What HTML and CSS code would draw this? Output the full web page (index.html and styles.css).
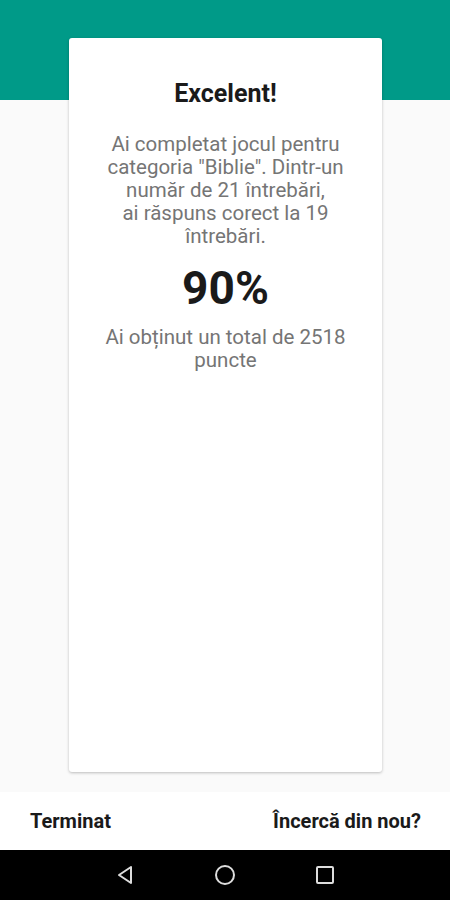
FILE: index.html
```html
<!DOCTYPE html>
<html lang="ro">
<head>
    <meta charset="UTF-8">
    <meta name="viewport" content="width=device-width, initial-scale=1.0">
    <title>Rezultat</title>
    <link rel="stylesheet" href="styles.css">
</head>
<body>
    <div class="screen">
        <div class="header"></div>

        <div class="content">
            <div class="card">
                <h1 class="title">Excelent!</h1>
                <p class="summary">Ai completat jocul pentru categoria "Biblie". Dintr-un număr de 21 întrebări,<br>ai răspuns corect la 19 întrebări.</p>
                <div class="percent">90%</div>
                <p class="points">Ai obținut un total de 2518 puncte</p>
            </div>
        </div>

        <div class="actions">
            <button type="button" class="action">Terminat</button>
            <button type="button" class="action">Încercă din nou?</button>
        </div>

        <div class="navbar">
            <svg width="24" height="24" viewBox="0 0 24 24"><path d="M18 4 L6 12 L18 20 Z" fill="none" stroke="#ddd" stroke-width="2" stroke-linejoin="round"/></svg>
            <svg width="24" height="24" viewBox="0 0 24 24"><circle cx="12" cy="12" r="9" fill="none" stroke="#ddd" stroke-width="2"/></svg>
            <svg width="24" height="24" viewBox="0 0 24 24"><rect x="4" y="4" width="16" height="16" rx="1" fill="none" stroke="#ddd" stroke-width="2"/></svg>
        </div>
    </div>
</body>
</html>
```

FILE: styles.css
```css
body {
    margin: 0;
    font-family: Roboto, 'Noto Sans', sans-serif;
    background-color: #fafafa;
}

.screen {
    height: 900px;
    display: flex;
    flex-direction: column;
    position: relative;
}

.header {
    background-color: #009a88;
    height: 100px;
    position: absolute;
    top: 0;
    left: 0;
    right: 0;
}

.content {
    flex: 1;
    padding: 38px 68px 20px 69px;
    position: relative;
    display: flex;
}

.card {
    flex: 1;
    background-color: #fff;
    border-radius: 3px;
    box-shadow: 0 1px 3px rgba(0, 0, 0, 0.25);
    padding: 40px 22px 0;
    text-align: center;
}

.title {
    margin: 0;
    font-size: 25px;
    font-weight: bold;
    color: #1a1a1a;
    line-height: 32px;
}

.summary {
    margin: 23px 0 0;
    font-size: 20.5px;
    line-height: 23px;
    color: #757575;
}

.percent {
    margin-top: 13px;
    font-size: 46px;
    font-weight: bold;
    color: #1a1a1a;
    line-height: 54px;
}

.points {
    margin: 11px 0 0;
    font-size: 20.5px;
    line-height: 23px;
    color: #757575;
}

.actions {
    height: 58px;
    background-color: #fff;
    display: flex;
    justify-content: space-between;
    align-items: center;
    padding: 0 29px 0 30px;
}

.action {
    border: none;
    background: none;
    padding: 0;
    font-family: Roboto, 'Noto Sans', sans-serif;
    font-size: 20px;
    font-weight: bold;
    color: #1a1a1a;
    cursor: pointer;
}

.navbar {
    height: 50px;
    background-color: #000;
    display: flex;
    justify-content: center;
    align-items: center;
    gap: 76px;
}
```
